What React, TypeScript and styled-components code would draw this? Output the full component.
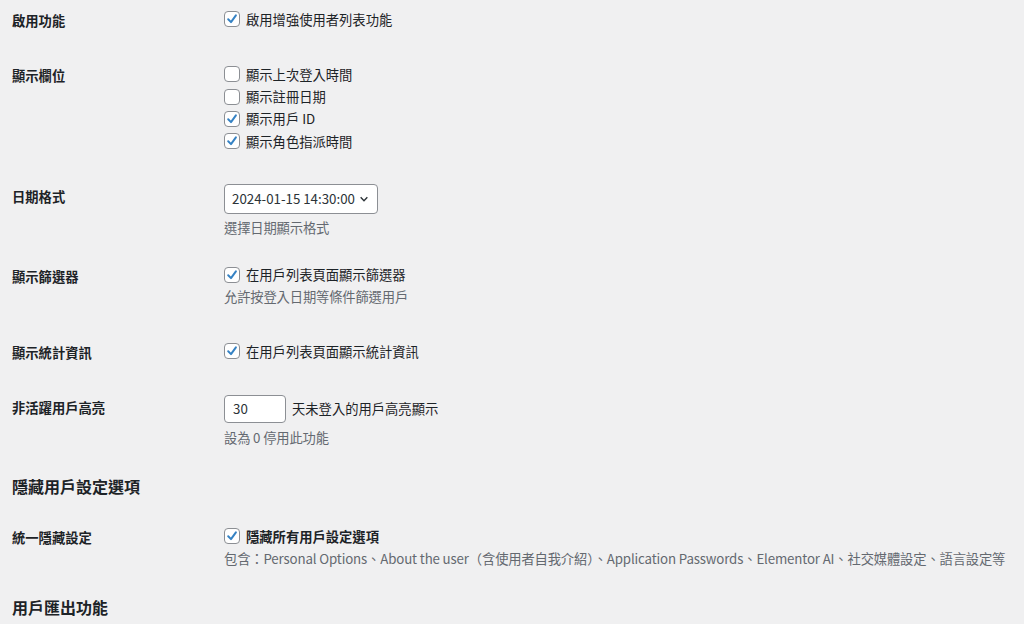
import React from 'react';
import styled, { createGlobalStyle } from 'styled-components';

const GlobalStyle = createGlobalStyle`
  html, body {
    margin: 0;
    padding: 0;
    background: #f0f0f1;
    overflow: hidden;
  }
  body {
    font-family: "Noto Sans CJK TC", "Noto Sans", sans-serif;
    color: #1d2327;
    font-size: 13.3px;
  }
`;

const Page = styled.div`
  padding: 0 12px;
  width: 1000px;
`;

const Row = styled.div<{ $top?: number }>`
  display: grid;
  grid-template-columns: 212px 1fr;
  padding: ${p => p.$top ?? 15}px 0 16px;
`;

const Label = styled.div`
  font-size: 13.3px;
  font-weight: 700;
  line-height: 22px;
  padding-top: 2px;
`;

const Field = styled.div`
  display: flex;
  flex-direction: column;
  align-items: flex-start;
`;

const Option = styled.label<{ $strong?: boolean }>`
  display: flex;
  align-items: center;
  gap: 6px;
  height: 22.4px;
  font-size: 13.3px;
  font-weight: ${p => (p.$strong ? 700 : 400)};
`;

const Box = styled.span`
  width: 14px;
  height: 14px;
  border: 1px solid #8c8f94;
  border-radius: 4px;
  background: #fff;
  display: flex;
  align-items: center;
  justify-content: center;
  flex-shrink: 0;
`;

const Desc = styled.p<{ $gap?: number }>`
  margin: ${p => p.$gap ?? 4}px 0 0;
  font-size: 13.3px;
  line-height: 18px;
  letter-spacing: -0.15px;
  color: #646970;
  white-space: nowrap;
`;

const SelectWrap = styled.div`
  position: relative;
  width: 154px;
  height: 30px;
`;

const Select = styled.select`
  appearance: none;
  width: 100%;
  height: 100%;
  box-sizing: border-box;
  border: 1px solid #8c8f94;
  border-radius: 4px;
  background: #fff;
  padding: 0 18px 0 7px;
  font-family: inherit;
  font-size: 13.3px;
  color: #2c3338;
`;

const Chevron = styled.svg`
  position: absolute;
  right: 9px;
  top: 10px;
  pointer-events: none;
`;

const Inline = styled.div`
  display: flex;
  align-items: center;
  gap: 6px;
  font-size: 13.3px;
`;

const NumberInput = styled.input`
  width: 62px;
  height: 28px;
  box-sizing: border-box;
  border: 1px solid #8c8f94;
  border-radius: 4px;
  background: #fff;
  padding: 0 8px;
  font-family: inherit;
  font-size: 13.3px;
  color: #2c3338;
`;

const Heading = styled.h2`
  margin: 0;
  font-size: 16px;
  font-weight: 700;
  line-height: 22px;
  padding: 12px 0 10px;
`;

const Check: React.FC<{ on?: boolean }> = ({ on }) => (
  <Box>
    {on && (
      <svg width="14" height="14" viewBox="0 0 14 14">
        <path
          d="M3.2 7.3 L6 10.1 L10.9 3.4"
          fill="none"
          stroke="#3582c4"
          strokeWidth="2"
          strokeLinecap="round"
          strokeLinejoin="round"
        />
      </svg>
    )}
  </Box>
);

const CheckOption: React.FC<{ on?: boolean; strong?: boolean; children: React.ReactNode }> = ({
  on,
  strong,
  children,
}) => (
  <Option $strong={strong}>
    <Check on={on} />
    {children}
  </Option>
);

export default function App() {
  return (
    <Page>
      <GlobalStyle />
      <Row $top={8}>
        <Label>啟用功能</Label>
        <Field>
          <CheckOption on>啟用增強使用者列表功能</CheckOption>
        </Field>
      </Row>
      <Row>
        <Label>顯示欄位</Label>
        <Field>
          <CheckOption>顯示上次登入時間</CheckOption>
          <CheckOption>顯示註冊日期</CheckOption>
          <CheckOption on>顯示用戶 ID</CheckOption>
          <CheckOption on>顯示角色指派時間</CheckOption>
        </Field>
      </Row>
      <Row>
        <Label>日期格式</Label>
        <Field>
          <SelectWrap>
            <Select defaultValue="a">
              <option value="a">2024-01-15 14:30:00</option>
            </Select>
            <Chevron width="10" height="10" viewBox="0 0 12 12">
              <path d="M2 4l4 4 4-4" fill="none" stroke="#2c3338" strokeWidth="1.7" />
            </Chevron>
          </SelectWrap>
          <Desc $gap={5}>選擇日期顯示格式</Desc>
        </Field>
      </Row>
      <Row $top={11}>
        <Label>顯示篩選器</Label>
        <Field>
          <CheckOption on>在用戶列表頁面顯示篩選器</CheckOption>
          <Desc $gap={2}>允許按登入日期等條件篩選用戶</Desc>
        </Field>
      </Row>
      <Row $top={18}>
        <Label>顯示統計資訊</Label>
        <Field>
          <CheckOption on>在用戶列表頁面顯示統計資訊</CheckOption>
        </Field>
      </Row>
      <Row>
        <Label>非活躍用戶高亮</Label>
        <Field>
          <Inline>
            <NumberInput defaultValue="30" />
            天未登入的用戶高亮顯示
          </Inline>
          <Desc $gap={6}>設為 0 停用此功能</Desc>
        </Field>
      </Row>
      <Heading>隱藏用戶設定選項</Heading>
      <Row $top={18}>
        <Label>統一隱藏設定</Label>
        <Field>
          <CheckOption on strong>
            隱藏所有用戶設定選項
          </CheckOption>
          <Desc $gap={3}>
            包含：Personal Options、About the user（含使用者自我介紹）、Application Passwords、Elementor AI、社交媒體設定、語言設定等
          </Desc>
        </Field>
      </Row>
      <Heading>用戶匯出功能</Heading>
    </Page>
  );
}
